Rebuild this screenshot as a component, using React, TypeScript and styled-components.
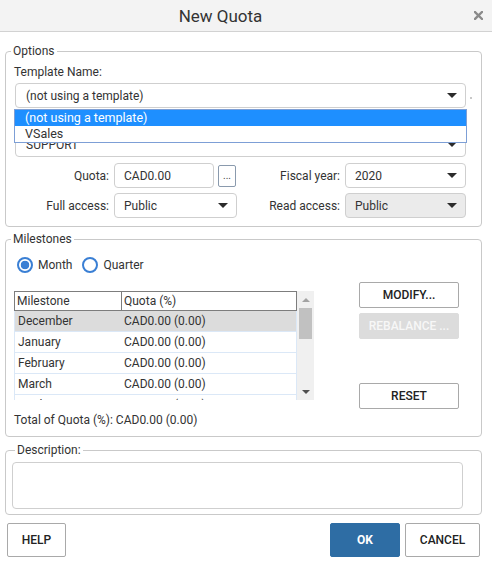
import styled, { createGlobalStyle } from "styled-components";

const GlobalStyle = createGlobalStyle`
  body {
    margin: 0;
    background: #fff;
    font-family: Roboto, "Liberation Sans", sans-serif;
    font-size: 12px;
    color: #333;
  }
`;

const Dialog = styled.div`
  width: 492px;
  height: 570px;
  background: #fff;
  overflow: hidden;
`;

const TitleBar = styled.div`
  height: 31px;
  border-bottom: 1px solid #d2d2d2;
  background: #f3f3f3;
  display: flex;
  align-items: center;
`;

const Title = styled.div`
  flex: 1;
  text-align: center;
  font-size: 17px;
  color: #333;
`;

const CloseButton = styled.div`
  width: 51px;
  display: flex;
  justify-content: flex-end;
  padding-right: 9px;
  box-sizing: border-box;
`;

const Group = styled.fieldset<{ $top: number; $pad: string }>`
  margin: ${(p) => p.$top}px 10px 0 5px;
  padding: ${(p) => p.$pad};
  border: 1px solid #c9c9c9;
  border-radius: 4px;
  min-width: 0;
`;

const Legend = styled.legend<{ $shift?: number }>`
  margin-left: ${(p) => p.$shift ?? -4}px;
  padding: 0 2px;
  font-size: 12px;
  line-height: 14px;
  color: #333;
`;

const FieldLabel = styled.div`
  line-height: 14px;
  margin-left: -1px;
  margin-bottom: 4px;
`;

const TemplateRow = styled.div`
  position: relative;
  display: flex;
  align-items: center;
`;

const RequiredDot = styled.span`
  width: 2px;
  height: 2px;
  background: #c8c8c8;
  margin: 4px -6px 0 4px;
`;

const Select = styled.div<{ $disabled?: boolean; $inset?: number; $top?: number }>`
  flex: 1;
  height: 25px;
  box-sizing: border-box;
  margin-top: ${(p) => p.$top ?? 0}px;
  display: flex;
  align-items: center;
  justify-content: space-between;
  padding: 0 8px 0 ${(p) => p.$inset ?? 9}px;
  border: 1px solid #cfcfcf;
  border-radius: 4px;
  background: ${(p) => (p.$disabled ? "#ebebeb" : "#fff")};
  color: #333;
`;

const Caret = styled.span`
  width: 0;
  height: 0;
  border-left: 5px solid transparent;
  border-right: 5px solid transparent;
  border-top: 5px solid #2b2b2b;
`;

const Menu = styled.div`
  position: absolute;
  top: 26px;
  left: -1px;
  width: 451px;
  border: 1px solid #7d9fd6;
  background: #fff;
  z-index: 2;
`;

const MenuItem = styled.div<{ $active?: boolean }>`
  height: 16px;
  line-height: 16px;
  padding-left: 10px;
  font-size: 12.5px;
  background: ${(p) => (p.$active ? "#1e8fff" : "#fff")};
  color: ${(p) => (p.$active ? "#fff" : "#333")};
`;

const FieldGrid = styled.div`
  display: grid;
  grid-template-columns: 99px 123px 108px 1fr;
  grid-auto-rows: 25px;
  row-gap: 5px;
  margin-top: 6px;
  align-items: center;
`;

const GridLabel = styled.div`
  text-align: right;
  padding-right: 5px;
`;

const QuotaCell = styled.div`
  display: flex;
  align-items: center;
  gap: 4px;
`;

const TextInput = styled.div`
  width: 100px;
  height: 25px;
  box-sizing: border-box;
  display: flex;
  align-items: center;
  padding-left: 9px;
  border: 1px solid #cfcfcf;
  border-radius: 4px;
`;

const EllipsisButton = styled.div`
  width: 18px;
  height: 22px;
  box-sizing: border-box;
  border: 1px solid #8a9aad;
  border-radius: 2px;
  display: flex;
  align-items: center;
  justify-content: center;
  font-size: 10px;
  color: #444;
`;

const RadioRow = styled.div`
  display: flex;
  align-items: center;
  height: 16px;
  padding-left: 2px;
`;

const RadioOption = styled.label`
  display: flex;
  align-items: center;
  gap: 5px;
  margin-right: 10px;
  font-size: 12px;
`;

const RadioMark = styled.span<{ $checked?: boolean }>`
  width: 16px;
  height: 16px;
  box-sizing: border-box;
  border: 2px solid #3a7fd4;
  border-radius: 50%;
  background: ${(p) =>
    p.$checked ? "radial-gradient(circle, #3a7fd4 0 4px, #fff 4.6px)" : "#fff"};
`;

const MilestoneBody = styled.div`
  display: flex;
  justify-content: space-between;
  margin-top: 9px;
`;

const TableWrap = styled.div`
  display: flex;
  margin: 9px 0 0 -1px;
  height: 109px;
  overflow: hidden;
`;

const Table = styled.div`
  width: 283px;
`;

const HeadRow = styled.div`
  display: grid;
  grid-template-columns: 106px 1fr;
  height: 20px;
  box-sizing: border-box;
  border: 1px solid #7d7d7d;
  align-items: center;
`;

const HeadCell = styled.div<{ $divider?: boolean }>`
  height: 100%;
  display: flex;
  align-items: center;
  padding-left: 2px;
  border-left: ${(p) => (p.$divider ? "1px solid #7d7d7d" : "none")};
`;

const Row = styled.div<{ $selected?: boolean }>`
  display: grid;
  grid-template-columns: 107px 1fr;
  height: 21px;
  box-sizing: border-box;
  align-items: center;
  border-left: 1px solid #dbe8f7;
  border-right: 1px solid #dbe8f7;
  border-bottom: 1px solid #dbe8f7;
  background: ${(p) => (p.$selected ? "#dcdcdc" : "#fff")};
`;

const Cell = styled.div<{ $first?: boolean }>`
  padding-left: ${(p) => (p.$first ? 3 : 2)}px;
`;

const Scrollbar = styled.div`
  width: 17px;
  background: #f0f0f0;
  display: flex;
  flex-direction: column;
  align-items: center;
`;

const ArrowZone = styled.div`
  height: 17px;
  display: flex;
  align-items: center;
  justify-content: center;
`;

const ArrowUp = styled.span`
  border-left: 4px solid transparent;
  border-right: 4px solid transparent;
  border-bottom: 4px solid #a3a3a3;
`;

const ArrowDown = styled.span`
  border-left: 4px solid transparent;
  border-right: 4px solid transparent;
  border-top: 4px solid #505050;
`;

const Thumb = styled.div`
  width: 13px;
  height: 31px;
  background: #c1c1c1;
`;

const Spacer = styled.div`
  flex: 1;
`;

const ButtonColumn = styled.div`
  width: 100px;
  display: flex;
  flex-direction: column;
  gap: 5px;
`;

const Button = styled.button<{ $variant?: "primary" | "disabled"; $w?: number; $h?: number; $gap?: number }>`
  width: ${(p) => (p.$w ? `${p.$w}px` : "100%")};
  height: ${(p) => p.$h ?? 26}px;
  margin-top: ${(p) => p.$gap ?? 0}px;
  box-sizing: border-box;
  border: 1px solid ${(p) => (p.$variant === "primary" ? "#2e6da4" : p.$variant === "disabled" ? "#dcdcdc" : "#a9a9a9")};
  border-radius: 2px;
  background: ${(p) => (p.$variant === "primary" ? "#2e6da4" : p.$variant === "disabled" ? "#dcdcdc" : "#fff")};
  color: ${(p) => (p.$variant === "primary" ? "#fff" : p.$variant === "disabled" ? "#f7f7f7" : "#222")};
  font-family: Roboto, "Liberation Sans", sans-serif;
  font-size: 12px;
  font-weight: ${(p) => (p.$variant === "primary" ? 700 : 500)};
  padding: 0;
`;

const Total = styled.div`
  margin-top: 4px;
  margin-left: -1px;
  line-height: 14px;
`;

const TextArea = styled.div`
  height: 47px;
  box-sizing: border-box;
  border: 1px solid #cfcfcf;
  border-radius: 4px;
`;

const Footer = styled.div`
  display: flex;
  align-items: center;
  margin-top: 8px;
  padding: 0 12px 0 7px;
  gap: 5px;
`;

// only as many rows as the list shows; April peeks in at the bottom
const months = ["December", "January", "February", "March", "April"];

export default function App() {
  return (
    <Dialog>
      <GlobalStyle />
      <TitleBar>
        <Title>New Quota</Title>
        <CloseButton>
          <svg width="9" height="9" viewBox="0 0 9 9">
            <path d="M1 1L8 8M8 1L1 8" stroke="#8a8a8a" strokeWidth="2.4" strokeLinecap="square" />
          </svg>
        </CloseButton>
      </TitleBar>

      <Group $top={12} $pad="7px 15px 8px 9px">
        <Legend>Options</Legend>
        <FieldLabel>Template Name:</FieldLabel>
        <TemplateRow>
          <Select $inset={10}>
            <span>(not using a template)</span>
            <Caret />
          </Select>
          <RequiredDot />
          <Menu>
            <MenuItem $active>(not using a template)</MenuItem>
            <MenuItem>VSales</MenuItem>
          </Menu>
        </TemplateRow>
        <TemplateRow>
          <Select $inset={10} $top={24}>
            <span>SUPPORT</span>
            <Caret />
          </Select>
        </TemplateRow>
        <FieldGrid>
          <GridLabel>Quota:</GridLabel>
          <QuotaCell>
            <TextInput>CAD0.00</TextInput>
            <EllipsisButton>...</EllipsisButton>
          </QuotaCell>
          <GridLabel>Fiscal year:</GridLabel>
          <Select>
            <span>2020</span>
            <Caret />
          </Select>
          <GridLabel>Full access:</GridLabel>
          <Select>
            <span>Public</span>
            <Caret />
          </Select>
          <GridLabel>Read access:</GridLabel>
          <Select $disabled>
            <span>Public</span>
            <Caret />
          </Select>
        </FieldGrid>
      </Group>

      <Group $top={5} $pad="11px 22px 9px 9px">
        <Legend>Milestones</Legend>
        <RadioRow>
          <RadioOption>
            <RadioMark $checked />
            Month
          </RadioOption>
          <RadioOption>
            <RadioMark />
            Quarter
          </RadioOption>
        </RadioRow>
        <MilestoneBody>
          <TableWrap>
            <Table>
              <HeadRow>
                <HeadCell>Milestone</HeadCell>
                <HeadCell $divider>Quota (%)</HeadCell>
              </HeadRow>
              {months.map((m, i) => (
                <Row key={m} $selected={i === 0}>
                  <Cell $first>{m}</Cell>
                  <Cell>CAD0.00 (0.00)</Cell>
                </Row>
              ))}
            </Table>
            <Scrollbar>
              <ArrowZone>
                <ArrowUp />
              </ArrowZone>
              <Thumb />
              <Spacer />
              <ArrowZone>
                <ArrowDown />
              </ArrowZone>
            </Scrollbar>
          </TableWrap>
          <ButtonColumn>
            <Button>MODIFY...</Button>
            <Button $variant="disabled">REBALANCE ...</Button>
            <Button $gap={39}>RESET</Button>
          </ButtonColumn>
        </MilestoneBody>
        <Total>Total of Quota (%): CAD0.00 (0.00)</Total>
      </Group>

      <Group $top={6} $pad="5px 18px 5px 6px">
        <Legend $shift={3}>Description:</Legend>
        <TextArea />
      </Group>

      <Footer>
        <Button $w={59} $h={34}>HELP</Button>
        <Spacer />
        <Button $w={70} $h={34} $variant="primary">OK</Button>
        <Button $w={75} $h={34}>CANCEL</Button>
      </Footer>
    </Dialog>
  );
}
